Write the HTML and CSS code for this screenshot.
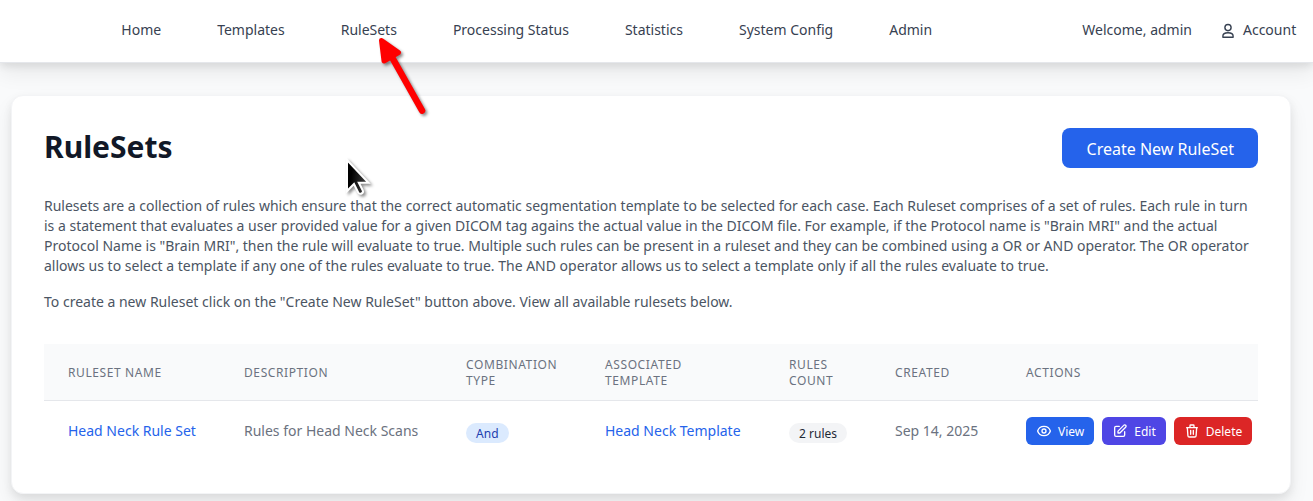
FILE: index.html
```
<!DOCTYPE html>
<html lang="en">
<head>
<meta charset="utf-8">
<title>RuleSets</title>
<link rel="stylesheet" href="styles.css">
</head>
<body>
<header class="topbar">
  <nav class="links">
    <a>Home</a><a>Templates</a><a>RuleSets</a><a>Processing Status</a><a>Statistics</a><a>System Config</a><a>Admin</a>
  </nav>
  <div class="user">
    <span>Welcome, admin</span>
    <a class="account">
      <svg width="14" height="16" viewBox="0 0 14 16" fill="none" stroke="currentColor" stroke-width="1.4" stroke-linejoin="round"><circle cx="7" cy="4.6" r="3.1"/><path d="M1.9 14.2v-1.1c0-2 2-3.3 5.1-3.3s5.1 1.3 5.1 3.3v1.1z"/></svg>
      <span>Account</span>
    </a>
  </div>
</header>
<main class="card">
  <div class="heading">
    <h1>RuleSets</h1>
    <button class="create">Create New RuleSet</button>
  </div>
  <p class="intro">Rulesets are a collection of rules which ensure that the correct automatic segmentation template to be selected for each case. Each Ruleset comprises of a set of rules. Each rule in turn<br>is a statement that evaluates a user provided value for a given DICOM tag agains the actual value in the DICOM file. For example, if the Protocol name is "Brain MRI" and the actual<br>Protocol Name is "Brain MRI", then the rule will evaluate to true. Multiple such rules can be present in a ruleset and they can be combined using a OR or AND operator. The OR operator<br>allows us to select a template if any one of the rules evaluate to true. The AND operator allows us to select a template only if all the rules evaluate to true.</p>
  <p class="intro">To create a new Ruleset click on the "Create New RuleSet" button above. View all available rulesets below.</p>
  <table class="rules">
    <colgroup><col class="c-name"><col class="c-desc"><col class="c-comb"><col class="c-tmpl"><col class="c-count"><col class="c-date"><col class="c-act"></colgroup>
    <thead>
      <tr><th>Ruleset Name</th><th>Description</th><th>Combination<br>Type</th><th>Associated<br>Template</th><th>Rules<br>Count</th><th>Created</th><th>Actions</th></tr>
    </thead>
    <tbody>
      <tr>
        <td><a class="link">Head Neck Rule Set</a></td>
        <td>Rules for Head Neck Scans</td>
        <td><span class="pill pill-blue">And</span></td>
        <td><a class="link">Head Neck Template</a></td>
        <td><span class="pill pill-gray">2 rules</span></td>
        <td>Sep 14, 2025</td>
        <td>
          <div class="actions">
            <a class="btn view"><svg viewBox="0 0 24 24"><circle cx="12" cy="12" r="3"/><path d="M2.46 12C3.73 7.94 7.52 5 12 5s8.27 2.94 9.54 7c-1.27 4.06-5.06 7-9.54 7s-8.27-2.94-9.54-7z"/></svg>View</a>
            <a class="btn edit"><svg viewBox="0 0 24 24"><path d="M11 5H6a2 2 0 00-2 2v11a2 2 0 002 2h11a2 2 0 002-2v-5m-1.41-9.41a2 2 0 112.82 2.82L11.83 15H9v-2.83l8.59-8.58z"/></svg>Edit</a>
            <a class="btn delete"><svg viewBox="0 0 24 24"><path d="M19 7l-.87 12.14A2 2 0 0116.14 21H7.86a2 2 0 01-2-1.86L5 7m5 4v6m4-6v6m1-10V4a1 1 0 00-1-1h-4a1 1 0 00-1 1v3M4 7h16"/></svg>Delete</a>
          </div>
        </td>
      </tr>
    </tbody>
  </table>
</main>
<svg class="arrow" width="70" height="95" viewBox="0 0 70 95"><g fill="red" stroke="red" stroke-linejoin="round" stroke-linecap="round"><path d="M57 80.5L28 29" stroke-width="6.6"/><path d="M16.5 10.5L33.5 22.5 19 31z" stroke-width="5"/></g></svg>
<svg class="cursor" width="40" height="50" viewBox="0 0 40 50"><defs><linearGradient id="shade" x1="0" y1="0.4" x2="1" y2="0.6"><stop offset="0.2" stop-color="#000"/><stop offset="1" stop-color="#444"/></linearGradient></defs><path d="M7 10v31l7-7 4.2 8.5q1.4 2 3.4 1t1.2-3l-4-7.7h9.7z" fill="url(#shade)" stroke="#fff" stroke-width="2"/></svg>
</body>
</html>
```
FILE: styles.css
```
* { box-sizing: border-box; }
body {
  margin: 0;
  height: 501px;
  overflow: hidden;
  background: #f9fafb;
  font-family: "Noto Sans", sans-serif;
  font-size: 14px;
  line-height: 20px;
  color: #4b5563;
}
.topbar {
  display: flex;
  justify-content: space-between;
  height: 63px;
  padding: 20px 16.8px 0 121.3px;
  background: #fff;
  border-bottom: 1px solid #e5e7eb;
  box-shadow: 0 10px 20px rgba(0, 0, 0, .07), 0 3px 8px rgba(0, 0, 0, .09);
  color: #374151;
}
.links { display: flex; gap: 56px; white-space: nowrap; }
.user { display: flex; gap: 29px; }
.account { display: flex; gap: 8px; }
.account svg { margin-top: 3px; }
.card {
  position: relative;
  width: 1280px;
  height: 399px;
  margin: 32px 0 0 11px;
  padding: 32px;
  background: #fff;
  border: 1px solid #f3f4f6;
  border-radius: 12px;
  box-shadow: 0 10px 20px rgba(0, 0, 0, .07), 0 4px 8px rgba(0, 0, 0, .07);
}
.heading {
  display: flex;
  justify-content: space-between;
  height: 40px;
  margin-bottom: 28px;
}
h1 { margin: 0; font-size: 30px; line-height: 38px; font-weight: 700; color: #111827; }
.create {
  width: 196px;
  height: 40px;
  padding: 2px 0 0 .6px;
  border: 0;
  border-radius: 8px;
  background: #2563eb;
  color: #fff;
  font: 16px/24px "Noto Sans", sans-serif;
}
.intro { margin: 0 0 16px; white-space: nowrap; }
.rules {
  width: 1214px;
  margin-top: 32px;
  table-layout: fixed;
  border-collapse: separate;
  border-spacing: 0;
}
.c-name { width: 176px; }
.c-desc { width: 222px; }
.c-comb { width: 139px; }
.c-tmpl { width: 184px; }
.c-count { width: 106px; }
.c-date { width: 131px; }
.c-act { width: 256px; }
th {
  height: 57px;
  padding: 2px 0 0 24px;
  background: #f9fafb;
  border-bottom: 1px solid #e5e7eb;
  text-align: left;
  font-size: 12px;
  line-height: 16px;
  font-weight: 400;
  letter-spacing: .6px;
  text-transform: uppercase;
  color: #6b7280;
}
td { height: 60px; padding: 0 0 0 24px; white-space: nowrap; color: #6b7280; }
.link { color: #2563eb; }
.pill {
  display: block;
  width: fit-content;
  margin-top: 4px;
  padding: 3px 10.1px 1px;
  border-radius: 10px;
  font-size: 12px;
  line-height: 16px;
}
.pill-blue { background: #dbeafe; color: #1e40af; }
.pill-gray { background: #f3f4f6; color: #1f2937; }
.actions { display: flex; gap: 8px; }
.btn {
  display: flex;
  align-items: center;
  height: 28px;
  padding: 1px 10px 0;
  border-radius: 6px;
  color: #fff;
  font-size: 12px;
  line-height: 16px;
}
.btn svg {
  width: 16px;
  height: 16px;
  margin: -1px 6px 0 0;
  fill: none;
  stroke: currentColor;
  stroke-width: 2;
  stroke-linecap: round;
  stroke-linejoin: round;
}
.view { background: #2563eb; }
.edit { background: #4f46e5; }
.delete { background: #dc2626; }
.arrow, .cursor { position: absolute; filter: drop-shadow(2px 2px 1.5px rgba(0, 0, 0, .45)); }
.arrow { left: 365px; top: 30px; }
.cursor { left: 340px; top: 150px; }
```
